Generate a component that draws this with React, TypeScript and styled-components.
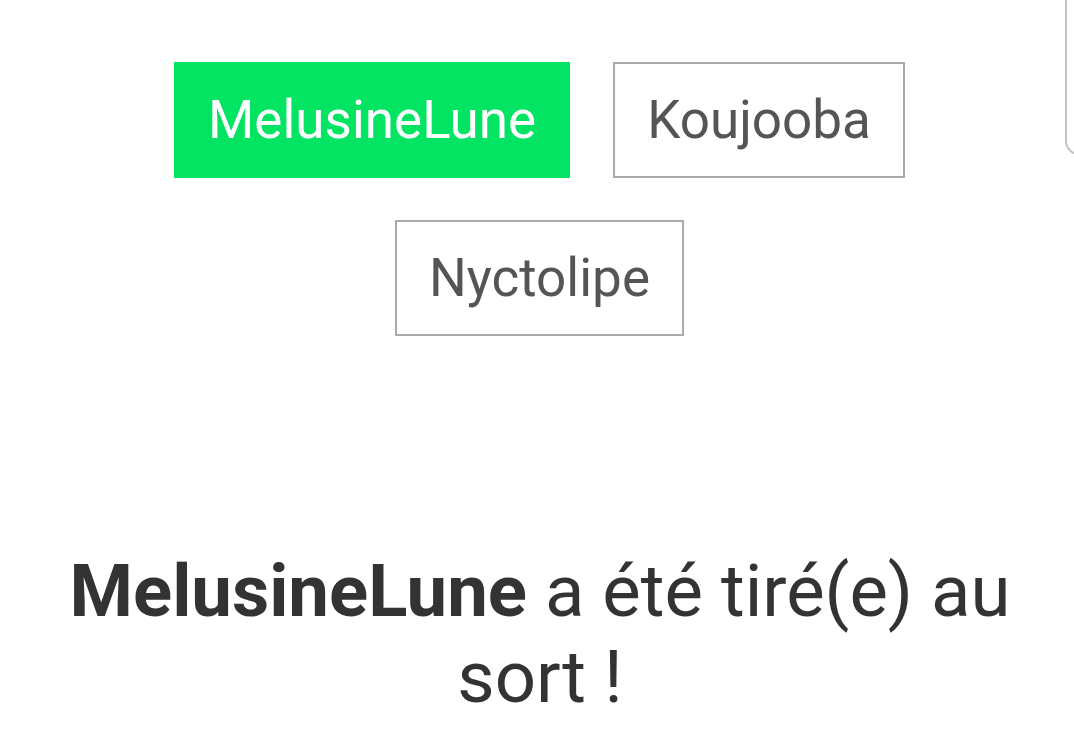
import styled, { createGlobalStyle } from "styled-components"

const GlobalStyle = createGlobalStyle`
    html, body {
        margin: 0;
        padding: 0;
        background: #ffffff;
        font-family: Roboto, "Noto Sans", Arial, sans-serif;
    }
`

const Page = styled.div`
    position: relative;
    width: 100%;
    min-height: 744px;
    overflow: hidden;
    display: flex;
    flex-direction: column;
    align-items: center;
`

// edge of a card sitting off screen on the right
const SideCard = styled.div`
    position: absolute;
    top: -20px;
    left: 1065px;
    width: 60px;
    height: 175px;
    border: 2px solid #c2c2c2;
    border-radius: 0 0 0 14px;
    box-sizing: border-box;
`

const Choices = styled.div`
    margin-top: 62px;
    margin-left: 5px;
    width: 800px;
    display: flex;
    flex-wrap: wrap;
    justify-content: center;
    gap: 42px 43px;
`

const Choice = styled.button<{ $picked?: boolean }>`
    box-sizing: border-box;
    height: 116px;
    padding: 0 32px;
    font-family: Roboto, sans-serif;
    font-size: 53px;
    font-weight: 400;
    cursor: pointer;
    border: 2px solid ${p => (p.$picked ? "#02e462" : "#aaaaaa")};
    background: ${p => (p.$picked ? "#02e462" : "#ffffff")};
    color: ${p => (p.$picked ? "#ffffff" : "#555555")};
`

const Result = styled.p`
    margin: 213px 0 0;
    padding: 0 37px 0 43px;
    width: 100%;
    box-sizing: border-box;
    text-align: center;
    color: #333333;
    font-size: 72.5px;
    line-height: 86px;
    b {
        font-weight: 700;
    }
`

const names = ["MelusineLune", "Koujooba", "Nyctolipe"]

export default function App() {
    const winner = "MelusineLune"

    return (
        <Page>
            <GlobalStyle />
            <SideCard />
            <Choices>
                {names.map(n => (
                    <Choice key={n} $picked={n === winner}>{n}</Choice>
                ))}
            </Choices>
            <Result>
                <b>{winner}</b> a été tiré(e) au sort !
            </Result>
        </Page>
    )
}
